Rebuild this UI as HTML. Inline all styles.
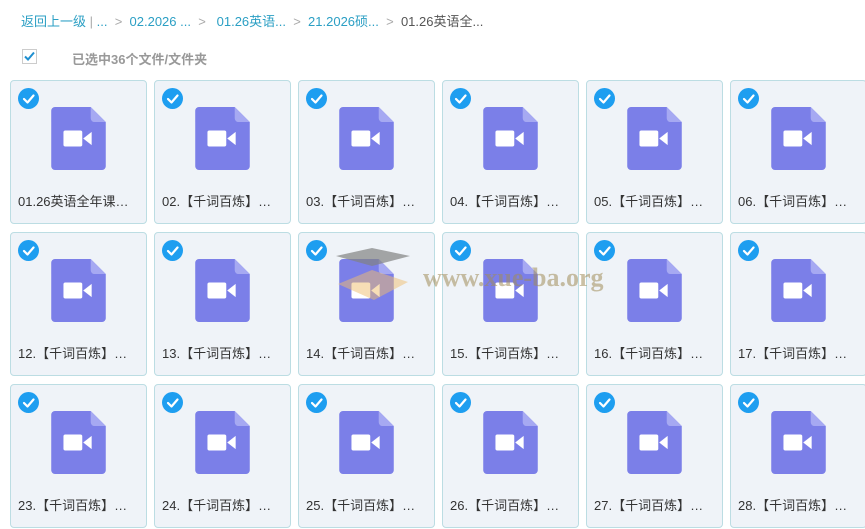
<!DOCTYPE html>
<html><head><meta charset="utf-8"><style>
*{margin:0;padding:0;box-sizing:border-box}
body{width:865px;height:529px;overflow:hidden;background:#fff;font-family:"Liberation Sans","Noto Sans CJK SC",sans-serif;position:relative}
.bc{position:absolute;left:21px;top:11px;font-size:13px;color:#2b9fc4;white-space:nowrap}
.bc .g{color:#aaa}
.bc .d{color:#555}
.sel{position:absolute;left:22px;top:49px;font-size:13px;color:#999;font-weight:bold}
.cb{position:absolute;left:22px;top:49px;width:15px;height:15px;border:1px solid #ccc;background:#fff}
.card{position:absolute;width:137px;height:144px;border:1px solid #bcdde3;border-radius:4px;background:#eff3f8}
.chk{position:absolute;left:7px;top:7px;width:21px;height:21px;border-radius:50%;background:#1e9ef0}
.ic{position:absolute;left:40px;top:26px}
.lb{position:absolute;left:7px;top:110px;font-size:13px;color:#333;white-space:nowrap}
.wm{position:absolute;left:423px;top:263px;font-family:"Liberation Serif",serif;font-weight:bold;font-size:26px;color:rgba(160,140,90,.55)}
</style></head><body>
<div class="bc">返回上一级 <span class="g">|</span> ... <span class="g">&nbsp;&gt;&nbsp;</span> 02.2026 ... <span class="g">&nbsp;&gt;&nbsp;</span> &nbsp;01.26英语... <span class="g">&nbsp;&gt;&nbsp;</span> 21.2026硕... <span class="g">&nbsp;&gt;&nbsp;</span> <span class="d">01.26英语全...</span></div>
<div class="cb"><svg width="15" height="15" viewBox="0 0 15 15" style="position:absolute;left:-1px;top:-1px"><path d="M3 7.5l3 3 6-7" fill="none" stroke="#1e8fd0" stroke-width="2"/></svg></div>
<div class="sel" style="left:72px">已选中36个文件/文件夹</div>

<svg width="0" height="0" style="position:absolute"><defs>
<g id="vid"><path d="M4 0h38l16 16v47a4 4 0 0 1-4 4H4a4 4 0 0 1-4-4V4a4 4 0 0 1 4-4z" fill="#7b7fe8"/><path d="M42 0l16 16H46a4 4 0 0 1-4-4z" fill="#a6a9f2"/><rect x="13" y="25" width="20" height="17" rx="2" fill="#fff"/><path d="M34 33.5l9-7v14z" fill="#fff"/></g>
<g id="ck"><path d="M6 11l3.5 3.5 6-7" fill="none" stroke="#fff" stroke-width="2.2" stroke-linecap="round" stroke-linejoin="round"/></g>
</defs></svg>

<div class="card" style="left:10px;top:80px"><svg class="chk"><use href="#ck"/></svg><svg class="ic" width="55" height="63" viewBox="0 0 58 67"><use href="#vid"/></svg><div class="lb">01.26英语全年课…</div></div>
<div class="card" style="left:154px;top:80px"><svg class="chk"><use href="#ck"/></svg><svg class="ic" width="55" height="63" viewBox="0 0 58 67"><use href="#vid"/></svg><div class="lb">02.【千词百炼】…</div></div>
<div class="card" style="left:298px;top:80px"><svg class="chk"><use href="#ck"/></svg><svg class="ic" width="55" height="63" viewBox="0 0 58 67"><use href="#vid"/></svg><div class="lb">03.【千词百炼】…</div></div>
<div class="card" style="left:442px;top:80px"><svg class="chk"><use href="#ck"/></svg><svg class="ic" width="55" height="63" viewBox="0 0 58 67"><use href="#vid"/></svg><div class="lb">04.【千词百炼】…</div></div>
<div class="card" style="left:586px;top:80px"><svg class="chk"><use href="#ck"/></svg><svg class="ic" width="55" height="63" viewBox="0 0 58 67"><use href="#vid"/></svg><div class="lb">05.【千词百炼】…</div></div>
<div class="card" style="left:730px;top:80px"><svg class="chk"><use href="#ck"/></svg><svg class="ic" width="55" height="63" viewBox="0 0 58 67"><use href="#vid"/></svg><div class="lb">06.【千词百炼】…</div></div>

<div class="card" style="left:10px;top:232px"><svg class="chk"><use href="#ck"/></svg><svg class="ic" width="55" height="63" viewBox="0 0 58 67"><use href="#vid"/></svg><div class="lb">12.【千词百炼】…</div></div>
<div class="card" style="left:154px;top:232px"><svg class="chk"><use href="#ck"/></svg><svg class="ic" width="55" height="63" viewBox="0 0 58 67"><use href="#vid"/></svg><div class="lb">13.【千词百炼】…</div></div>
<div class="card" style="left:298px;top:232px"><svg class="chk"><use href="#ck"/></svg><svg class="ic" width="55" height="63" viewBox="0 0 58 67"><use href="#vid"/></svg><div class="lb">14.【千词百炼】…</div></div>
<div class="card" style="left:442px;top:232px"><svg class="chk"><use href="#ck"/></svg><svg class="ic" width="55" height="63" viewBox="0 0 58 67"><use href="#vid"/></svg><div class="lb">15.【千词百炼】…</div></div>
<div class="card" style="left:586px;top:232px"><svg class="chk"><use href="#ck"/></svg><svg class="ic" width="55" height="63" viewBox="0 0 58 67"><use href="#vid"/></svg><div class="lb">16.【千词百炼】…</div></div>
<div class="card" style="left:730px;top:232px"><svg class="chk"><use href="#ck"/></svg><svg class="ic" width="55" height="63" viewBox="0 0 58 67"><use href="#vid"/></svg><div class="lb">17.【千词百炼】…</div></div>

<div class="card" style="left:10px;top:384px"><svg class="chk"><use href="#ck"/></svg><svg class="ic" width="55" height="63" viewBox="0 0 58 67"><use href="#vid"/></svg><div class="lb">23.【千词百炼】…</div></div>
<div class="card" style="left:154px;top:384px"><svg class="chk"><use href="#ck"/></svg><svg class="ic" width="55" height="63" viewBox="0 0 58 67"><use href="#vid"/></svg><div class="lb">24.【千词百炼】…</div></div>
<div class="card" style="left:298px;top:384px"><svg class="chk"><use href="#ck"/></svg><svg class="ic" width="55" height="63" viewBox="0 0 58 67"><use href="#vid"/></svg><div class="lb">25.【千词百炼】…</div></div>
<div class="card" style="left:442px;top:384px"><svg class="chk"><use href="#ck"/></svg><svg class="ic" width="55" height="63" viewBox="0 0 58 67"><use href="#vid"/></svg><div class="lb">26.【千词百炼】…</div></div>
<div class="card" style="left:586px;top:384px"><svg class="chk"><use href="#ck"/></svg><svg class="ic" width="55" height="63" viewBox="0 0 58 67"><use href="#vid"/></svg><div class="lb">27.【千词百炼】…</div></div>
<div class="card" style="left:730px;top:384px"><svg class="chk"><use href="#ck"/></svg><svg class="ic" width="55" height="63" viewBox="0 0 58 67"><use href="#vid"/></svg><div class="lb">28.【千词百炼】…</div></div>

<svg style="position:absolute;left:332px;top:244px" width="82" height="62"><path d="M4 12l36-8 38 8-38 10z" fill="rgba(130,130,130,.7)"/><path d="M6 40l34-14 36 12-34 18z" fill="rgba(240,190,110,.5)"/></svg>
<div class="wm">www.xue-ba.org</div>
</body></html>
